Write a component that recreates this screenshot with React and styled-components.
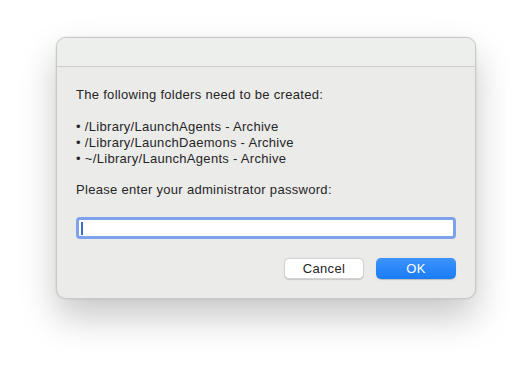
import React from 'react';
import styled, { createGlobalStyle } from 'styled-components';

const GlobalStyle = createGlobalStyle`
  html, body {
    margin: 0;
    padding: 0;
    background: #ffffff;
  }
  body {
    font-family: "Liberation Sans", Arial, sans-serif;
    -webkit-font-smoothing: antialiased;
  }
`;

const Page = styled.div`
  width: 532px;
  height: 373px;
  padding: 37px 0 0 56px;
  box-sizing: border-box;
`;

const Window = styled.div`
  width: 420px;
  height: 262px;
  box-sizing: border-box;
  background: #ebebea;
  border: 1px solid #c9c9c9;
  border-radius: 10px;
  overflow: hidden;
  display: flex;
  flex-direction: column;
  box-shadow: 0 18px 36px rgba(0, 0, 0, 0.22), 0 0 2px rgba(0, 0, 0, 0.15);
`;

const TitleBar = styled.div`
  height: 28px;
  flex: none;
  background: #edefed;
  border-bottom: 1px solid #cdcdcd;
`;

const Body = styled.div`
  padding: 20px 19px 0 19px;
  font-size: 13px;
  line-height: 16px;
  letter-spacing: 0.3px;
  color: #262626;
  display: flex;
  flex-direction: column;
`;

const Text = styled.p`
  margin: 0 0 ${(p) => p.$gap || 0}px 0;
`;

const List = styled.ul`
  list-style: none;
  margin: 0 0 15px 0;
  padding: 0;
`;

const Item = styled.li`
  &::before {
    content: '•';
    margin-right: 4px;
  }
`;

const Field = styled.div`
  height: 22px;
  box-sizing: border-box;
  border: 3px solid #7ea3ec;
  border-radius: 4px;
  background: #ffffff;
  display: flex;
  align-items: center;
  padding-left: 2px;
`;

const Caret = styled.span`
  width: 2px;
  height: 13px;
  background: #3d6ac9;
`;

const Buttons = styled.div`
  display: flex;
  justify-content: flex-end;
  gap: 12px;
  margin-top: 19px;
`;

const Button = styled.button`
  width: 80px;
  height: 21px;
  border-radius: 5px;
  font-family: "Liberation Sans", Arial, sans-serif;
  font-size: 13px;
  letter-spacing: 0.3px;
  padding: 0;
  cursor: pointer;
  border: ${(p) => (p.$primary ? 'none' : '1px solid #d4d4d4')};
  background: ${(p) => (p.$primary ? 'linear-gradient(#3d93fb, #1a7cf5)' : '#ffffff')};
  color: ${(p) => (p.$primary ? '#ffffff' : '#262626')};
  box-shadow: ${(p) => (p.$primary ? '0 0.5px 1px rgba(0,0,0,0.2)' : '0 0.5px 1px rgba(0,0,0,0.15)')};
`;

export default function App() {
  return (
    <>
      <GlobalStyle />
      <Page>
        <Window>
          <TitleBar />
          <Body>
            <Text $gap={16}>The following folders need to be created:</Text>
            <List>
              <Item>/Library/LaunchAgents - Archive</Item>
              <Item>/Library/LaunchDaemons - Archive</Item>
              <Item>~/Library/LaunchAgents - Archive</Item>
            </List>
            <Text $gap={19}>Please enter your administrator password:</Text>
            <Field>
              <Caret />
            </Field>
            <Buttons>
              <Button>Cancel</Button>
              <Button $primary>OK</Button>
            </Buttons>
          </Body>
        </Window>
      </Page>
    </>
  );
}
